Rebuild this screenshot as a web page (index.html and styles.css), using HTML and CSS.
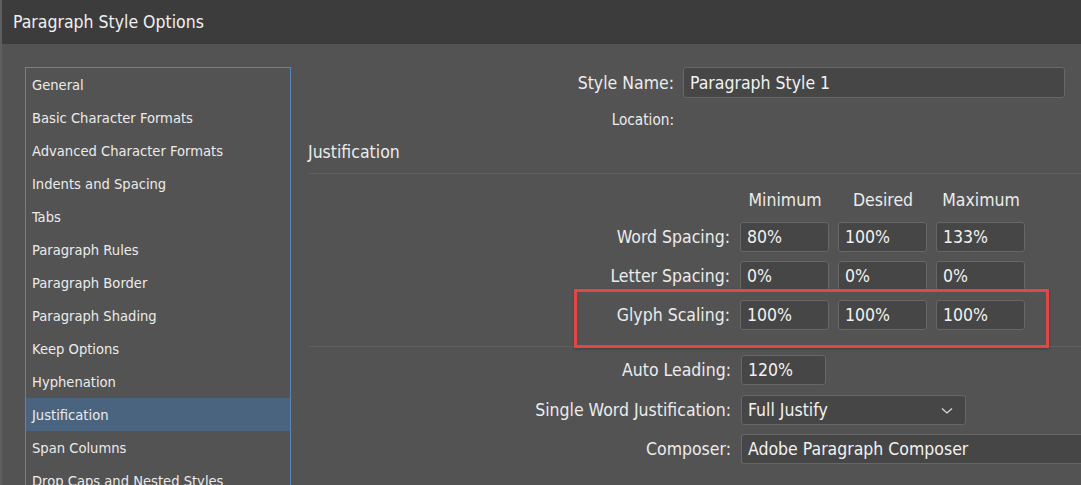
FILE: index.html
```html
<!DOCTYPE html>
<html>
<head>
<meta charset="utf-8">
<link rel="stylesheet" href="styles.css">
</head>
<body>
<div class="dialog">
  <div class="titlebar">Paragraph Style Options</div>
  <div class="content">
    <div class="sidebar">
      <ul class="list">
        <li>General</li>
        <li>Basic Character Formats</li>
        <li>Advanced Character Formats</li>
        <li>Indents and Spacing</li>
        <li>Tabs</li>
        <li>Paragraph Rules</li>
        <li>Paragraph Border</li>
        <li>Paragraph Shading</li>
        <li>Keep Options</li>
        <li>Hyphenation</li>
        <li class="selected">Justification</li>
        <li>Span Columns</li>
        <li>Drop Caps and Nested Styles</li>
      </ul>
    </div>
    <div class="main">
      <div class="name-row">
        <span class="name-label">Style Name:</span>
        <div class="field name-field">Paragraph Style 1</div>
      </div>
      <div class="loc-row">
        <span class="name-label small">Location:</span>
      </div>
      <div class="section-title">Justification</div>
      <div class="sep"></div>
      <div class="grid">
        <span></span>
        <span class="colhead">Minimum</span>
        <span class="colhead">Desired</span>
        <span class="colhead">Maximum</span>

        <span class="label">Word Spacing:</span>
        <div class="field">80%</div>
        <div class="field">100%</div>
        <div class="field">133%</div>

        <span class="label">Letter Spacing:</span>
        <div class="field">0%</div>
        <div class="field">0%</div>
        <div class="field">0%</div>

        <span class="label">Glyph Scaling:</span>
        <div class="field">100%</div>
        <div class="field">100%</div>
        <div class="field">100%</div>
      </div>
      <div class="sep sep2"></div>
      <div class="lower">
        <span class="label">Auto Leading:</span>
        <div class="field auto">120%</div>

        <span class="label">Single Word Justification:</span>
        <div class="field select">Full Justify
          <svg class="chev" width="12" height="8" viewBox="0 0 12 8"><path d="M1 1.5 L6 6 L11 1.5" fill="none" stroke="#d8d8d8" stroke-width="1.3"/></svg>
        </div>

        <span class="label">Composer:</span>
        <div class="field composer">Adobe Paragraph Composer</div>
      </div>
      <div class="highlight"></div>
    </div>
  </div>
</div>
</body>
</html>
```
FILE: styles.css
```css
html, body {
  margin: 0;
  padding: 0;
  background: #535353;
  overflow: hidden;
}
body {
  width: 1081px;
  height: 485px;
  font-family: "DejaVu Sans Condensed", "DejaVu Sans", sans-serif;
  font-stretch: condensed;
  color: #ececec;
}
.dialog {
  height: 485px;
  border-left: 2px solid #5e5e5e;
  box-sizing: border-box;
  display: flex;
  flex-direction: column;
}
.titlebar {
  height: 44px;
  flex: none;
  background: #3c3c3c;
  font-size: 17.5px;
  line-height: 45px;
  padding-left: 11px;
  color: #f0f0f0;
}
.content {
  flex: 1;
  display: flex;
  overflow: hidden;
}
.sidebar {
  padding: 23px 0 0 23px;
  width: 266px;
  flex: none;
}
.list {
  list-style: none;
  margin: 0;
  padding: 0;
  border: 1px solid #5b84b8;
  border-bottom: none;
  height: 440px;
  box-sizing: border-box;
}
.list li {
  height: 33px;
  line-height: 33px;
  font-size: 14.6px;
  padding-left: 6px;
  color: #ebebeb;
  white-space: nowrap;
}
.list li.selected {
  background: #4a6480;
}
.main {
  flex: 1;
  padding: 23px 0 0 17px;
  position: relative;
}
.name-row {
  display: flex;
  align-items: center;
  height: 31px;
}
.name-label {
  width: 366px;
  text-align: right;
  font-size: 17.5px;
  margin-right: 9px;
  flex: none;
}
.name-label.small {
  font-size: 15.2px;
}
.field {
  box-sizing: border-box;
  height: 30px;
  line-height: 29px;
  border: 1px solid #676767;
  border-radius: 3px;
  background: #464646;
  font-size: 17.5px;
  padding-left: 6px;
  color: #f2f2f2;
  white-space: nowrap;
}
.name-field {
  width: 382px;
  height: 31px;
  line-height: 30px;
}
.loc-row {
  display: flex;
  height: 20px;
  align-items: center;
  margin-top: 12px;
}
.section-title {
  font-size: 17.5px;
  margin-top: 9px;
  height: 24px;
  line-height: 26px;
}
.sep {
  height: 1px;
  background: #5f5f5f;
  margin-top: 10px;
}
.grid {
  display: grid;
  grid-template-columns: 423px 89px 89px 89px;
  column-gap: 9px;
  row-gap: 9px;
  grid-template-rows: 30px 30px 30px 30px;
  margin-top: 9px;
}
.grid .label, .lower .label {
  text-align: right;
  font-size: 17.5px;
  line-height: 30px;
  height: 30px;
  white-space: nowrap;
}
.grid .label {
  margin-right: 1px;
}
.colhead {
  text-align: center;
  font-size: 17.5px;
  line-height: 34px;
  padding-left: 1px;
}
.sep2 {
  margin-top: 16px;
}
.lower {
  display: grid;
  grid-template-columns: 423px auto;
  grid-auto-rows: 30px;
  column-gap: 10px;
  row-gap: 9.5px;
  margin-top: 8px;
  justify-items: start;
}
.lower .label {
  justify-self: end;
}
.auto {
  width: 85px;
}
.select {
  width: 225px;
  position: relative;
}
.chev {
  position: absolute;
  right: 12px;
  top: 11px;
}
.composer {
  width: 360px;
  border-right: none;
  border-radius: 3px 0 0 3px;
}
.highlight {
  position: absolute;
  left: 283px;
  top: 245px;
  width: 475px;
  height: 59px;
  box-sizing: border-box;
  border: 3px solid #e04848;
  border-radius: 1px;
  box-shadow: 0 1px 3px rgba(0,0,0,0.25);
}
```
